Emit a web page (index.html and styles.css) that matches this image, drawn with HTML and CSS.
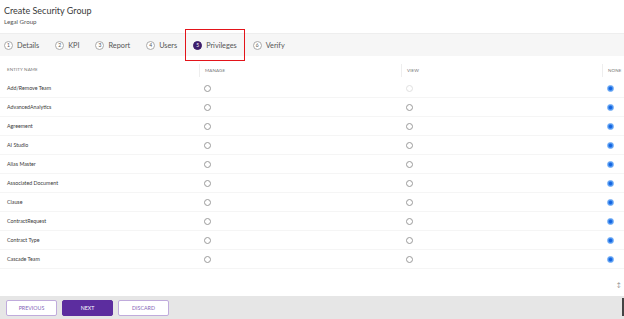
FILE: index.html
```html
<!DOCTYPE html>
<html lang="en">
<head>
    <meta charset="UTF-8">
    <meta name="viewport" content="width=device-width, initial-scale=1.0">
    <title>Create Security Group</title>
    <link rel="stylesheet" href="styles.css">
</head>
<body>
    <div class="page">
        <header class="page-header">
            <h1 class="title">Create Security Group</h1>
            <div class="subtitle">Legal Group</div>
        </header>

        <nav class="steps">
            <div class="step"><span class="step-num">1</span>Details</div>
            <div class="step"><span class="step-num">2</span>KPI</div>
            <div class="step"><span class="step-num">3</span>Report</div>
            <div class="step"><span class="step-num">4</span>Users</div>
            <div class="step active"><span class="step-num">5</span>Privileges</div>
            <div class="step"><span class="step-num">6</span>Verify</div>
        </nav>

        <div class="grid-wrap">
            <div class="grid">
                <div class="row head">
                    <div class="cell">Entity Name</div>
                    <div class="cell">Manage</div>
                    <div class="cell">View</div>
                    <div class="cell">None</div>
                </div>
                <div class="row">
                    <div class="cell">Add/Remove Team</div>
                    <div class="cell"><span class="radio"></span></div>
                    <div class="cell"><span class="radio disabled"></span></div>
                    <div class="cell"><span class="radio checked"></span></div>
                </div>
                <div class="row">
                    <div class="cell">AdvancedAnalytics</div>
                    <div class="cell"><span class="radio"></span></div>
                    <div class="cell"><span class="radio"></span></div>
                    <div class="cell"><span class="radio checked"></span></div>
                </div>
                <div class="row">
                    <div class="cell">Agreement</div>
                    <div class="cell"><span class="radio"></span></div>
                    <div class="cell"><span class="radio"></span></div>
                    <div class="cell"><span class="radio checked"></span></div>
                </div>
                <div class="row">
                    <div class="cell">AI Studio</div>
                    <div class="cell"><span class="radio"></span></div>
                    <div class="cell"><span class="radio"></span></div>
                    <div class="cell"><span class="radio checked"></span></div>
                </div>
                <div class="row">
                    <div class="cell">Alias Master</div>
                    <div class="cell"><span class="radio"></span></div>
                    <div class="cell"><span class="radio"></span></div>
                    <div class="cell"><span class="radio checked"></span></div>
                </div>
                <div class="row">
                    <div class="cell">Associated Document</div>
                    <div class="cell"><span class="radio"></span></div>
                    <div class="cell"><span class="radio"></span></div>
                    <div class="cell"><span class="radio checked"></span></div>
                </div>
                <div class="row">
                    <div class="cell">Clause</div>
                    <div class="cell"><span class="radio"></span></div>
                    <div class="cell"><span class="radio"></span></div>
                    <div class="cell"><span class="radio checked"></span></div>
                </div>
                <div class="row">
                    <div class="cell">ContractRequest</div>
                    <div class="cell"><span class="radio"></span></div>
                    <div class="cell"><span class="radio"></span></div>
                    <div class="cell"><span class="radio checked"></span></div>
                </div>
                <div class="row">
                    <div class="cell">Contract Type</div>
                    <div class="cell"><span class="radio"></span></div>
                    <div class="cell"><span class="radio"></span></div>
                    <div class="cell"><span class="radio checked"></span></div>
                </div>
                <div class="row">
                    <div class="cell">Cascade Team</div>
                    <div class="cell"><span class="radio"></span></div>
                    <div class="cell"><span class="radio"></span></div>
                    <div class="cell"><span class="radio checked"></span></div>
                </div>
            </div>
            <div class="resize">↕</div>
        </div>

        <footer class="actions">
            <button class="btn">Previous</button>
            <button class="btn primary">Next</button>
            <button class="btn">Discard</button>
            <span class="edge"></span>
        </footer>
    </div>
</body>
</html>
```

FILE: styles.css
```css
* {
    margin: 0;
    padding: 0;
    box-sizing: border-box;
}

body {
    width: 624px;
    height: 319px;
    overflow: hidden;
    background: #fff;
    color: #3a3a3a;
    font-family: Lato, "Open Sans", sans-serif;
}

.page {
    height: 319px;
    display: flex;
    flex-direction: column;
}

/* Header */
.page-header {
    padding: 4px 4px 0;
    height: 33px;
}

.title {
    font-size: 9px;
    font-weight: 400;
    line-height: 13px;
    color: #3a3a3a;
}

.subtitle {
    font-size: 6.2px;
    line-height: 10px;
    color: #555;
}

/* Steps */
.steps {
    height: 23px;
    display: flex;
    align-items: center;
    gap: 16px;
    padding-left: 4px;
    background: #f6f6f6;
    border-top: 1px solid #eeeeee;
}

.step {
    display: flex;
    align-items: center;
    gap: 4px;
    font-size: 7.3px;
    color: #555;
}

.step-num {
    width: 9px;
    height: 9px;
    border: 1px solid #aaa;
    border-radius: 50%;
    background: #fff;
    display: flex;
    align-items: center;
    justify-content: center;
    font-size: 5px;
    color: #555;
}

.step.active {
    position: relative;
}

.step.active .step-num {
    background: #3d1d6b;
    border-color: #3d1d6b;
    color: #fff;
}

/* annotation box */
.step.active::after {
    content: "";
    position: absolute;
    top: -12px;
    bottom: -11px;
    left: -8px;
    right: -8px;
    border: 1.5px solid #e3141a;
}

/* Privileges grid */
.grid-wrap {
    flex: 1;
    position: relative;
    padding-top: 4px;
    overflow: hidden;
}

.grid {
    width: 802px;
}

.row {
    display: grid;
    grid-template-columns: 199px 202px 201px 200px;
    height: 19px;
    border-bottom: 1px solid #f5f5f5;
}

.cell {
    display: flex;
    align-items: center;
    padding-left: 5px;
    font-size: 5.3px;
    color: #3a3a3a;
}

.cell:first-child {
    padding-left: 7px;
}

.row.head {
    border-bottom: none;
}

.row.head .cell {
    text-transform: uppercase;
    font-size: 4.5px;
    color: #777;
    letter-spacing: 0.1px;
}

.row.head .cell + .cell {
    border-left: 1px solid #eeeeee;
    margin: 4px 0 2px;
}

.radio {
    width: 7px;
    height: 7px;
    border: 1px solid #9a9a9a;
    border-radius: 50%;
    background: #fff;
}

.radio.disabled {
    border-color: #e0e0e0;
}

.radio.checked {
    border-color: #6aa8f4;
    background: radial-gradient(circle, #1565e0 0 35%, #3f8cf0 55%, #7ab3f6 100%);
}

.resize {
    position: absolute;
    right: 3px;
    bottom: 8px;
    font-size: 6px;
    color: #888;
}

/* Footer */
.actions {
    height: 23px;
    background: #e6e6e6;
    display: flex;
    align-items: center;
    gap: 5px;
    padding-left: 6px;
    position: relative;
}

.btn {
    width: 51px;
    height: 16px;
    border: 1px solid #c0abdc;
    border-radius: 2px;
    background: #fff;
    color: #8466b8;
    font-family: Lato, "Open Sans", sans-serif;
    font-size: 5.3px;
    text-transform: uppercase;
    cursor: pointer;
}

.btn.primary {
    background: #5c2d9f;
    border-color: #5c2d9f;
    color: #fff;
}

.edge {
    position: absolute;
    right: 0;
    top: 2px;
    width: 2px;
    height: 18px;
    background: #444;
}
```
